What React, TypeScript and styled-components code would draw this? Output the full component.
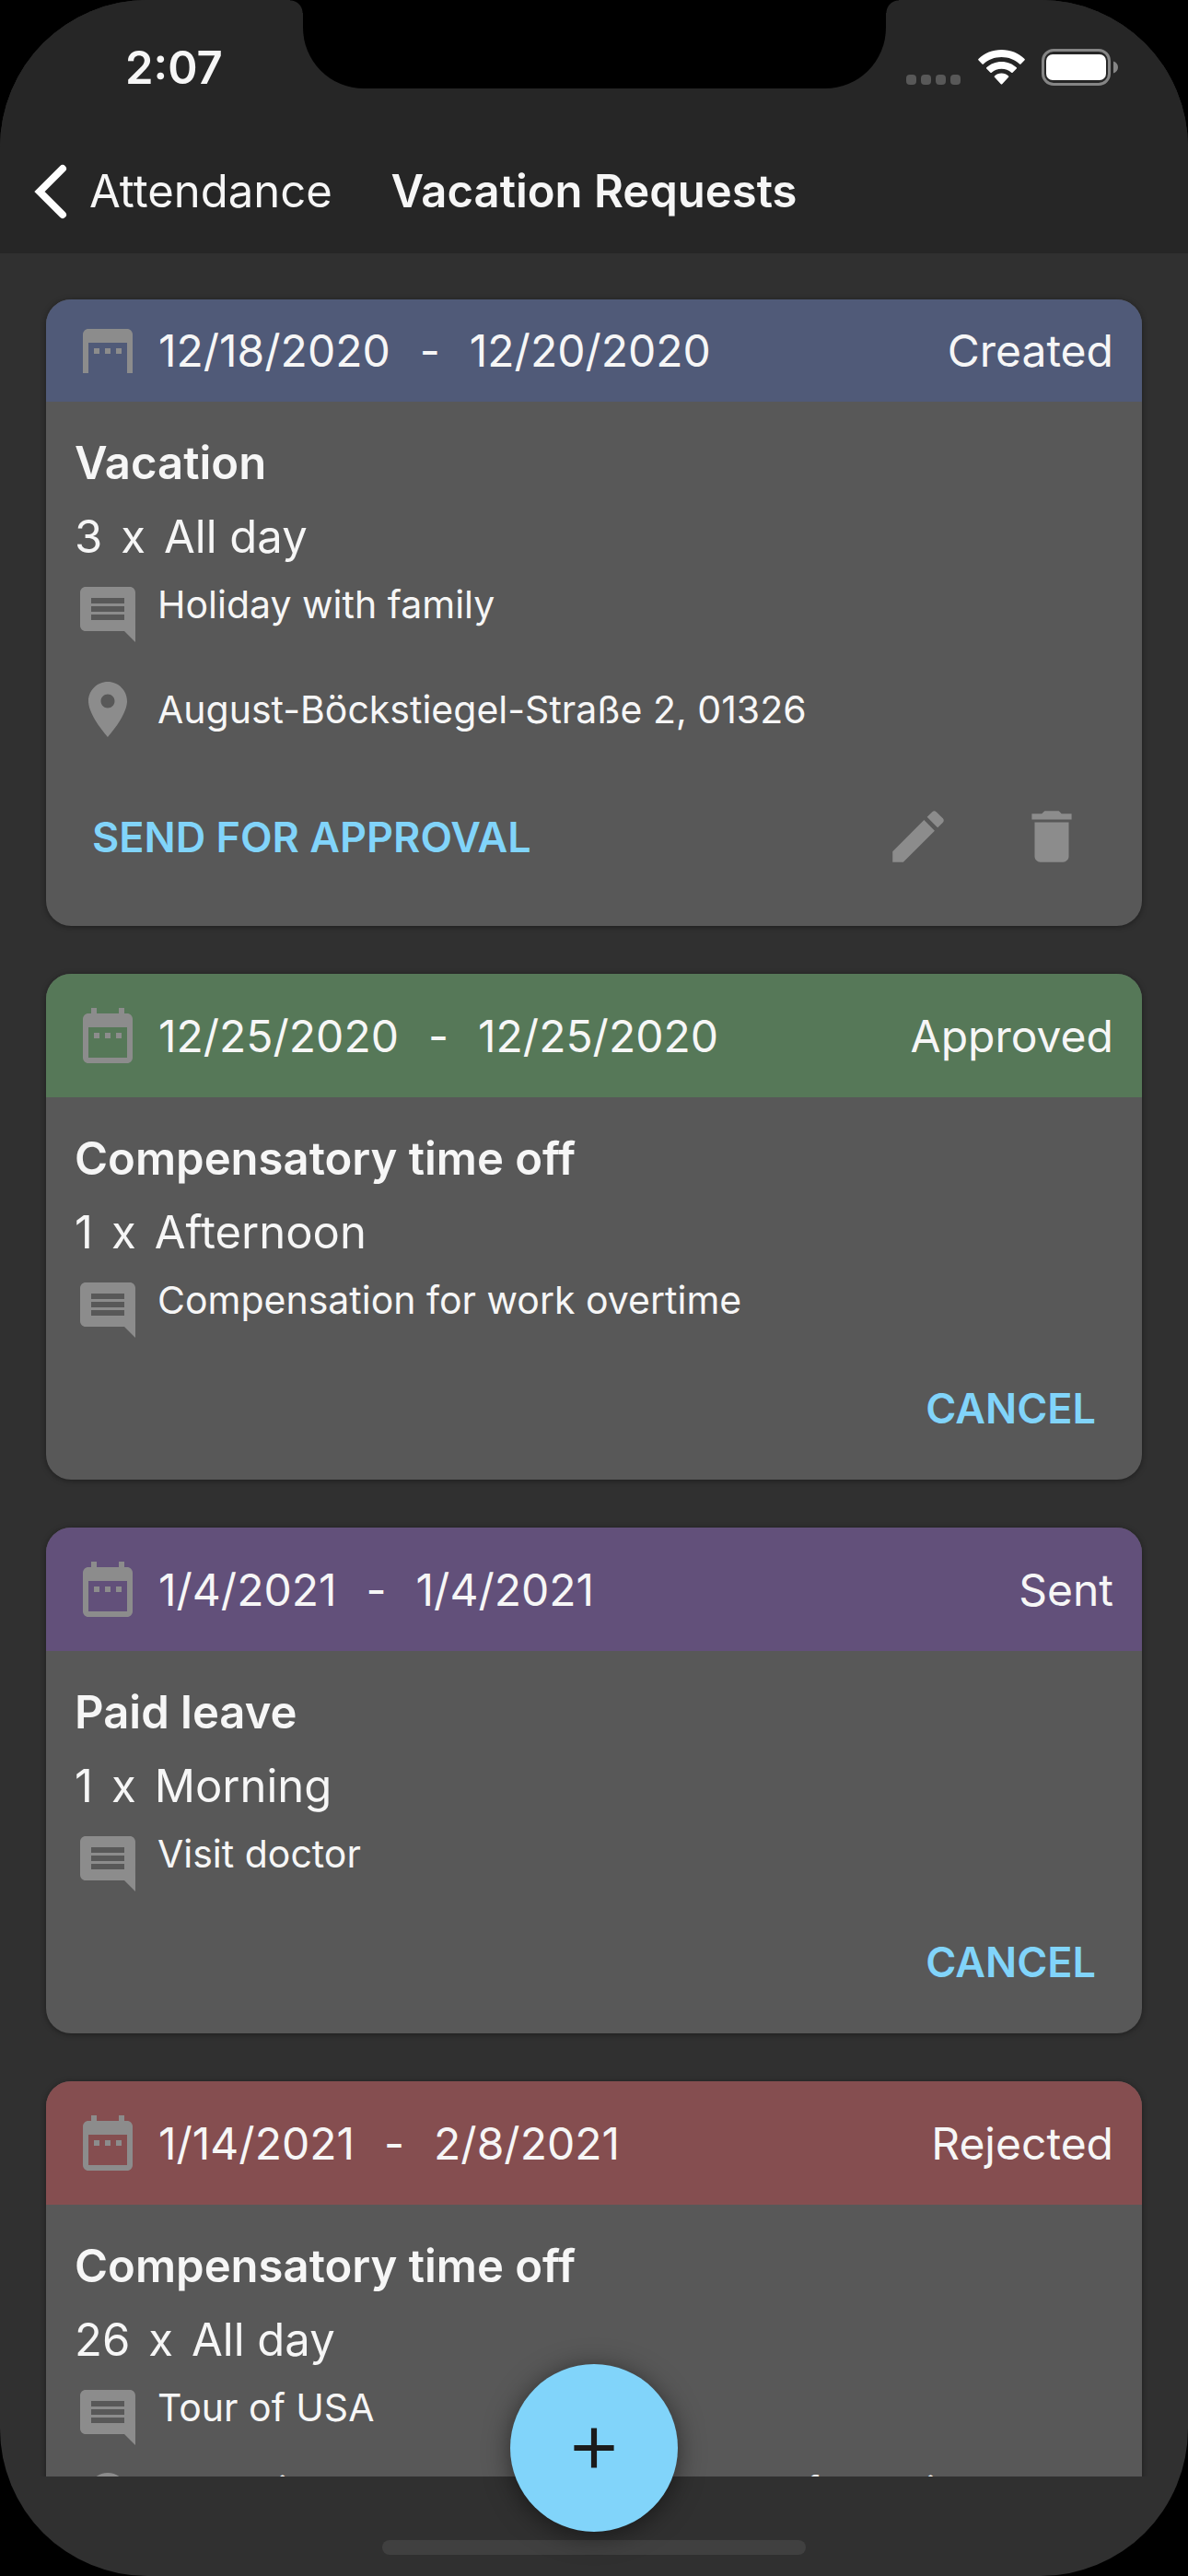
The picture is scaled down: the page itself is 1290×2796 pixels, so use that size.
import React from 'react';
import styled, { createGlobalStyle } from 'styled-components';

const c = {
  bezel: '#000000',
  bar: '#262626',
  page: '#303030',
  card: '#585858',
  icon: '#8c8c8c',
  text: '#f6f6f6',
  accent: '#81d4fa',
};

const GlobalStyle = createGlobalStyle`
  *, *::before, *::after { box-sizing: border-box; }
  body {
    margin: 0;
    background: ${c.bezel};
    color: ${c.text};
    font-family: Inter, Roboto, "Liberation Sans", sans-serif;
    font-size: 49px;
  }
  h1, h2, p, ul { margin: 0; padding: 0; font: inherit; }
  button { border: 0; margin: 0; background: none; color: inherit; font: inherit; cursor: pointer; }
  svg { display: block; flex: none; }
`;

const Screen = styled.div`
  position: relative;
  display: flex;
  flex-direction: column;
  height: 100vh;
  overflow: hidden;
  border-radius: 160px;
  background: ${c.page};
`;

const TopBar = styled.header`
  flex: none;
  background: ${c.bar};
`;

const StatusBar = styled.div`
  display: grid;
  grid-template-columns: 1fr 633px 1fr;
  align-items: center;
  height: 146px;
`;

const Time = styled.span`
  padding-left: 136px;
  font-weight: 600;
`;

const Notch = styled.div`
  position: relative;
  align-self: start;
  height: 96px;
  border-radius: 0 0 66px 66px;
  background: ${c.bezel};

  &::before,
  &::after {
    content: '';
    position: absolute;
    top: 0;
    width: 14px;
    height: 14px;
  }
  &::before {
    right: 100%;
    background: radial-gradient(circle at 0 100%, transparent 13px, ${c.bezel} 14px);
  }
  &::after {
    left: 100%;
    background: radial-gradient(circle at 100% 100%, transparent 13px, ${c.bezel} 14px);
  }
`;

const StatusIcons = styled.div`
  display: flex;
  align-items: center;
  gap: 18px;
  padding-left: 22px;
`;

const NavBar = styled.nav`
  display: grid;
  grid-template-columns: 1fr auto 1fr;
  align-items: center;
  height: 129px;
  padding-bottom: 6px;
`;

const BackButton = styled.button`
  display: flex;
  align-items: center;
  justify-self: start;
  gap: 22px;
  padding: 0 0 0 36px;
`;

const Title = styled.h1`
  font-weight: 600;
`;

const List = styled.main`
  display: flex;
  flex: 1;
  flex-direction: column;
  gap: 52px;
  min-height: 0;
  padding: 50px;
  overflow-y: auto;
  scrollbar-width: none;
`;

const Card = styled.article`
  flex: none;
  overflow: hidden;
  border-radius: 27px;
  background: ${c.card};
  box-shadow: 0 1px 6px rgba(0, 0, 0, 0.4);
`;

const CardHeader = styled.div<{ $color: string }>`
  display: flex;
  align-items: center;
  gap: 19px;
  padding: 31px;
  background: ${(p) => p.$color};
  font-size: 48px;
  line-height: 49px;
`;

const Dates = styled.div`
  display: flex;
  gap: 32px;
`;

const Status = styled.span`
  margin-left: auto;
`;

const CardBody = styled.div`
  padding: 27px 31px 41px;
`;

const Kind = styled.h2`
  font-weight: 600;
  line-height: 80px;
`;

const Amount = styled.p`
  display: flex;
  gap: 20px;
  line-height: 80px;
`;

const NoteRow = styled.div`
  display: flex;
  align-items: flex-start;
  gap: 18px;
  margin-top: 8px;
  font-size: 41px;
  line-height: 50px;
`;

const AddressRow = styled.div<{ $long?: boolean }>`
  display: flex;
  align-items: ${(p) => (p.$long ? 'flex-start' : 'center')};
  gap: 18px;
  min-height: 98px;
  margin-top: 18px;
  font-size: 41px;
  line-height: 50px;
`;

const Actions = styled.div`
  display: flex;
  align-items: center;
  gap: 11px;
  margin-top: 33px;
`;

const TextButton = styled.button<{ $end?: boolean }>`
  height: 74px;
  margin-left: ${(p) => (p.$end ? 'auto' : '0')};
  padding: 0 19px;
  color: ${c.accent};
  font-size: 45px;
  font-weight: 600;
  text-transform: uppercase;
`;

const IconButton = styled.button<{ $end?: boolean }>`
  display: grid;
  place-items: center;
  width: 134px;
  height: 112px;
  margin-left: ${(p) => (p.$end ? 'auto' : '0')};
  padding: 0;
`;

const BottomBar = styled.footer`
  display: flex;
  flex: none;
  align-items: flex-end;
  justify-content: center;
  height: 108px;
  padding-bottom: 23px;
`;

const HomeIndicator = styled.div`
  width: 460px;
  height: 16px;
  border-radius: 8px;
  background: #404040;
`;

/* Floats over the list, centred on the bottom edge. */
const AddButton = styled.button`
  position: absolute;
  bottom: 48px;
  left: 50%;
  display: grid;
  place-items: center;
  width: 182px;
  height: 182px;
  padding: 0;
  transform: translateX(-50%);
  border-radius: 50%;
  background: ${c.accent};
  box-shadow: 0 4px 28px rgba(0, 0, 0, 0.5);
`;

type IconProps = { d: string; size?: number; fill?: string };

const Icon = ({ d, size = 72, fill = c.icon }: IconProps) => (
  <svg width={size} height={size} viewBox="0 0 24 24" fill={fill} aria-hidden="true">
    <path d={d} />
  </svg>
);

const CALENDAR =
  'M9 11H7v2h2v-2zm4 0h-2v2h2v-2zm4 0h-2v2h2v-2zm2-7h-1V2h-2v2H8V2H6v2H5c-1.11 0-1.99.9-1.99 2L3 20c0 1.1.89 2 2 2h14c1.1 0 2-.9 2-2V6c0-1.1-.9-2-2-2zm0 16H5V9h14v11z';
const COMMENT =
  'M21.99 4c0-1.1-.89-2-1.99-2H4c-1.1 0-2 .9-2 2v12c0 1.1.9 2 2 2h14l4 4-.01-18zM18 14H6v-2h12v2zm0-3H6V9h12v2zm0-3H6V6h12v2z';
const PLACE =
  'M12 2C8.13 2 5 5.13 5 9c0 5.25 7 13 7 13s7-7.75 7-13c0-3.87-3.13-7-7-7zm0 9.5c-1.38 0-2.5-1.12-2.5-2.5s1.12-2.5 2.5-2.5 2.5 1.12 2.5 2.5-1.12 2.5-2.5 2.5z';
const EDIT =
  'M3 17.25V21h3.75L17.81 9.94l-3.75-3.75L3 17.25zM20.71 7.04c.39-.39.39-1.02 0-1.41l-2.34-2.34c-.39-.39-1.02-.39-1.41 0l-1.83 1.83 3.75 3.75 1.83-1.83z';
const TRASH = 'M6 19c0 1.1.9 2 2 2h8c1.1 0 2-.9 2-2V7H6v12zM19 4h-3.5l-1-1h-5l-1 1H5v2h14V4z';
const PLUS = 'M19 13h-6v6h-2v-6H5v-2h6V5h2v6h6v2z';

const CompactCalendar = () => (
  <svg width="72" height="48" viewBox="0 4 24 16" fill={c.icon} aria-hidden="true">
    <path d={CALENDAR} />
  </svg>
);

const SignalIcon = () => (
  <svg width="60" height="38" viewBox="0 0 60 38" fill="#585858" aria-hidden="true">
    {[0, 16, 32, 48].map((x) => (
      <rect key={x} x={x} y="27" width="11" height="11" rx="4" />
    ))}
  </svg>
);

const WifiIcon = () => (
  <svg width="51" height="38" viewBox="0 0 51 38" fill="#fff" aria-hidden="true">
    <path d="M25.500 0C35.200 0 44.100 3.700 50.600 9.900c.4.400.4 1 0 1.400l-4.100 4.100c-.4.400-1 .4-1.400 0C39.900 10.600 33 7.900 25.500 7.900S11.100 10.600 5.900 15.400c-.4.400-1 .4-1.400 0L.4 11.300c-.4-.4-.4-1 0-1.400C6.900 3.700 15.800 0 25.500 0z" />
    <path d="M25.500 12.900c6.300 0 12 2.400 16.300 6.300.4.400.4 1 0 1.400l-4.200 4.200c-.4.400-1 .4-1.400 0-2.800-2.500-6.600-4-10.700-4s-7.900 1.500-10.700 4c-.4.400-1 .4-1.400 0l-4.200-4.200c-.4-.4-.4-1 0-1.400 4.300-3.900 10-6.300 16.300-6.300z" />
    <path d="M25.500 25.600c3 0 5.600 1.100 7.600 2.800.4.400.4 1 0 1.400l-6.900 7.500c-.4.400-1 .4-1.400 0l-6.900-7.500c-.4-.4-.4-1 0-1.400 2-1.700 4.600-2.800 7.600-2.800z" />
  </svg>
);

const BatteryIcon = () => (
  <svg width="84" height="40" viewBox="0 0 84 40" aria-hidden="true">
    <rect x="1.500" y="1.500" width="72" height="37" rx="11.500" fill="none" stroke="#858585" strokeWidth="3" />
    <rect x="5" y="6" width="65" height="28" rx="7" fill="#fff" />
    <path d="M78 13.500c3 1 5 3.500 5 6.500s-2 5.500-5 6.500z" fill="#858585" />
  </svg>
);

const ChevronIcon = () => (
  <svg width="39" height="60" viewBox="0 0 39 60" aria-hidden="true">
    <path d="M32 5 7 30l25 25" fill="none" stroke="#fff" strokeWidth="8" strokeLinecap="round" />
  </svg>
);

type Request = {
  from: string;
  to: string;
  status: string;
  color: string;
  kind: string;
  count: number;
  part: string;
  note: string;
  address?: string;
  longAddress?: boolean;
  editable?: boolean;
};

const requests: Request[] = [
  {
    from: '12/18/2020',
    to: '12/20/2020',
    status: 'Created',
    color: '#505a78',
    kind: 'Vacation',
    count: 3,
    part: 'All day',
    note: 'Holiday with family',
    address: 'August-Böckstiegel-Straße 2, 01326',
    editable: true,
  },
  {
    from: '12/25/2020',
    to: '12/25/2020',
    status: 'Approved',
    color: '#567858',
    kind: 'Compensatory time off',
    count: 1,
    part: 'Afternoon',
    note: 'Compensation for work overtime',
  },
  {
    from: '1/4/2021',
    to: '1/4/2021',
    status: 'Sent',
    color: '#62507a',
    kind: 'Paid leave',
    count: 1,
    part: 'Morning',
    note: 'Visit doctor',
  },
  {
    from: '1/14/2021',
    to: '2/8/2021',
    status: 'Rejected',
    color: '#854e50',
    kind: 'Compensatory time off',
    count: 26,
    part: 'All day',
    note: 'Tour of USA',
    address: 'Yosemite, CA 95389 United States of America',
    longAddress: true,
  },
];

const RequestCard = ({ r }: { r: Request }) => (
  <Card>
    <CardHeader $color={r.color}>
      {r.editable ? <CompactCalendar /> : <Icon d={CALENDAR} />}
      <Dates>
        <span>{r.from}</span>
        <span>-</span>
        <span>{r.to}</span>
      </Dates>
      <Status>{r.status}</Status>
    </CardHeader>
    <CardBody>
      <Kind>{r.kind}</Kind>
      <Amount>
        <span>{r.count}</span>
        <span>x</span>
        <span>{r.part}</span>
      </Amount>
      <NoteRow>
        <Icon d={COMMENT} />
        <p>{r.note}</p>
      </NoteRow>
      {r.address && (
        <AddressRow $long={r.longAddress}>
          <Icon d={PLACE} />
          <p>{r.address}</p>
        </AddressRow>
      )}
      <Actions>
        {r.editable ? (
          <>
            <TextButton type="button">Send for approval</TextButton>
            <IconButton type="button" aria-label="Edit" $end>
              <Icon d={EDIT} size={74} />
            </IconButton>
            <IconButton type="button" aria-label="Delete">
              <Icon d={TRASH} size={74} />
            </IconButton>
          </>
        ) : (
          <TextButton type="button" $end>
            Cancel
          </TextButton>
        )}
      </Actions>
    </CardBody>
  </Card>
);

export default function App() {
  return (
    <>
      <GlobalStyle />
      <Screen>
        <TopBar>
          <StatusBar>
            <Time>2:07</Time>
            <Notch />
            <StatusIcons>
              <SignalIcon />
              <WifiIcon />
              <BatteryIcon />
            </StatusIcons>
          </StatusBar>
          <NavBar>
            <BackButton type="button">
              <ChevronIcon />
              Attendance
            </BackButton>
            <Title>Vacation Requests</Title>
          </NavBar>
        </TopBar>
        <List>
          {requests.map((r) => (
            <RequestCard key={r.from} r={r} />
          ))}
        </List>
        <BottomBar>
          <HomeIndicator />
        </BottomBar>
        <AddButton type="button" aria-label="New request">
          <Icon d={PLUS} size={74} fill="#1b1b1b" />
        </AddButton>
      </Screen>
    </>
  );
}
